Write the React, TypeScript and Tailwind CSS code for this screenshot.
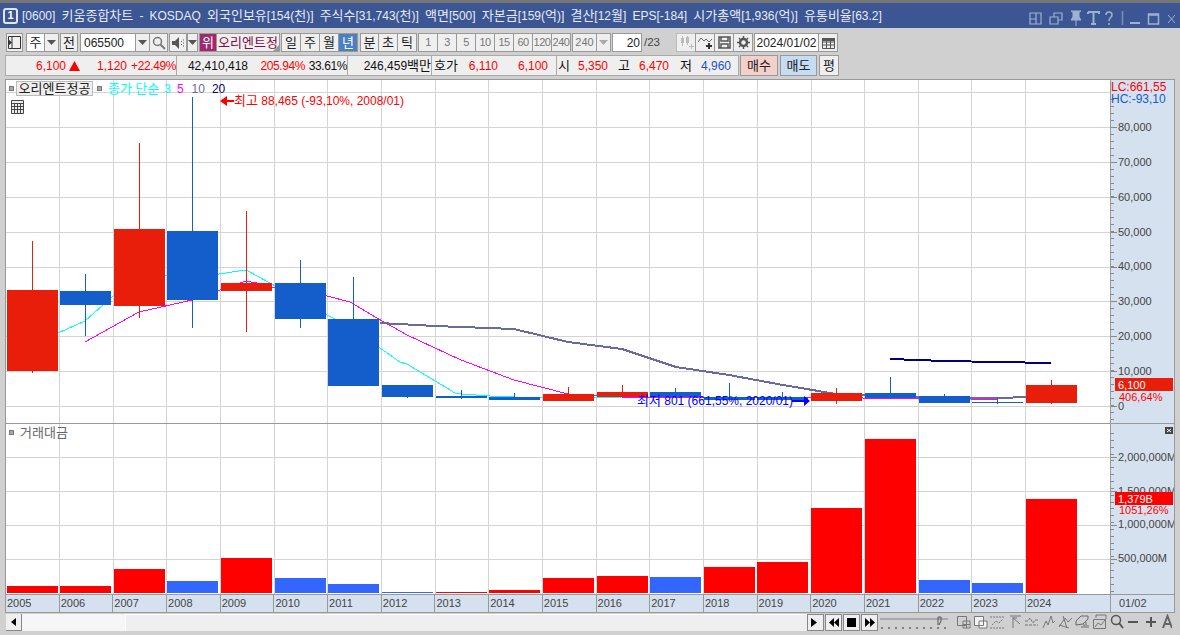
import { Fragment, type ReactNode } from "react";

const RED = "#e81e0a";
const BLUE = "#135ecb";
const gridX = [59, 113, 166, 220, 274, 327, 381, 435, 488, 542, 596, 649, 703, 757, 811, 864, 918, 971, 1025];
const priceY = [92, 127, 162, 197, 232, 267, 301, 336, 371, 406];
const volY = [457, 491, 525, 559];

// x = left edge, top/bottom = body, hi/lo = wick
const candles = [
  { x: 7, top: 290, bottom: 371, hi: 241, lo: 373, up: true },
  { x: 60, top: 291, bottom: 305, hi: 274, lo: 336, up: false },
  { x: 114, top: 229, bottom: 306, hi: 143, lo: 318, up: true },
  { x: 167, top: 231, bottom: 300, hi: 97, lo: 328, up: false },
  { x: 221, top: 283, bottom: 291, hi: 211, lo: 332, up: true },
  { x: 275, top: 283, bottom: 319, hi: 260, lo: 328, up: false },
  { x: 328, top: 319, bottom: 386, hi: 277, lo: 386, up: false },
  { x: 382, top: 385, bottom: 397, hi: 385, lo: 398, up: false },
  { x: 436, top: 396, bottom: 398, hi: 390, lo: 399, up: false },
  { x: 489, top: 397, bottom: 400, hi: 393, lo: 400, up: false },
  { x: 543, top: 394, bottom: 401, hi: 387, lo: 401, up: true },
  { x: 597, top: 392, bottom: 397, hi: 385, lo: 397, up: true },
  { x: 650, top: 392, bottom: 397, hi: 388, lo: 397, up: false },
  { x: 704, top: 397, bottom: 400, hi: 383, lo: 400, up: false },
  { x: 757, top: 397, bottom: 400, hi: 392, lo: 401, up: false },
  { x: 811, top: 393, bottom: 401, hi: 388, lo: 404, up: true },
  { x: 865, top: 393, bottom: 398, hi: 377, lo: 399, up: false },
  { x: 919, top: 396, bottom: 403, hi: 394, lo: 403, up: false },
  { x: 972, top: 402, bottom: 403, hi: 397, lo: 404, up: false },
  { x: 1026, top: 385, bottom: 403, hi: 380, lo: 404, up: true },
];

const volumes = [
  { x: 7, y: 586, up: true }, { x: 60, y: 586, up: true }, { x: 114, y: 569, up: true },
  { x: 167, y: 581, up: false }, { x: 221, y: 558, up: true }, { x: 275, y: 578, up: false },
  { x: 328, y: 584, up: false }, { x: 382, y: 592, up: false }, { x: 436, y: 592, up: true },
  { x: 489, y: 590, up: true }, { x: 543, y: 578, up: true }, { x: 597, y: 576, up: true },
  { x: 650, y: 577, up: false }, { x: 704, y: 567, up: true }, { x: 757, y: 562, up: true },
  { x: 811, y: 508, up: true }, { x: 865, y: 439, up: true }, { x: 919, y: 580, up: false },
  { x: 972, y: 583, up: false }, { x: 1026, y: 499, up: true },
];

const years = Array.from({ length: 20 }, (_, i) => String(2005 + i));

const ma3 = "58,333 85,321 103,305 113,296 139,284 166,275 192,275 219,274 246,270 270,283 300,300 327,315 335,319 380,348 400,362 407,364 455,393 461,394 490,396 540,398 622,397 676,398 836,398 998,400";
const ma5 = "85,342 139,312 192,300 220,290 246,281 262,284 300,295 327,296 350,302 377,318 400,331 407,335 461,360 514,380 568,394 622,397 836,397 890,399 944,398 998,400";
const ma10 = "380,323 435,326 514,329 568,342 622,349 676,367 729,375 783,385 836,394 890,396 944,398 1000,398 1051,396";
const ma20 = "890,359 917,360 944,361 998,362 1051,363";

// Hangul is set a bit larger than latin so the bitmap-font widths line up
function T({ children }: { children: string }) {
  return (
    <>
      {children.split(/([가-힣]+)/).map((part, i) =>
        /[가-힣]/.test(part) ? (
          <span key={i} className="text-[13px]">{part}</span>
        ) : (
          <Fragment key={i}>{part}</Fragment>
        )
      )}
    </>
  );
}

function SvgT({ children }: { children: string }) {
  return (
    <>
      {children.split(/([가-힣]+)/).map((part, i) =>
        /[가-힣]/.test(part) ? (
          <tspan key={i} fontSize="13">{part}</tspan>
        ) : (
          <tspan key={i}>{part}</tspan>
        )
      )}
    </>
  );
}

function Btn({ className = "", children }: { className?: string; children?: ReactNode }) {
  return (
    <div className={`h-[19px] shrink-0 flex items-center justify-center border border-[#999] bg-[#efefef] text-[12px] leading-none text-[#222] ${className}`}>
      {children}
    </div>
  );
}

function Arrow({ color = "#555" }: { color?: string }) {
  return (
    <svg width="9" height="5" viewBox="0 0 9 5">
      <path d="M0 0h9L4.500 5z" fill={color} />
    </svg>
  );
}

function Cell({ className = "", children }: { className?: string; children: string }) {
  return <span className={`shrink-0 whitespace-nowrap ${className}`}><T>{children}</T></span>;
}

function TitleBar() {
  const c = "#9fb1d3";
  return (
    <div className="h-[25px] bg-[#3b5693] flex items-center text-[#e6ebf5] text-[12px] leading-none">
      <div className="ml-[3px] w-[15px] h-[16px] rounded-[3px] border-2 border-[#dfe6f3] flex items-center justify-center text-[11px] font-bold text-white">1</div>
      <div className="ml-[4px] w-[900px] whitespace-nowrap [word-spacing:2.8px]">
        <T>[0600] 키움종합차트 - KOSDAQ 외국인보유[154(천)] 주식수[31,743(천)] 액면[500] 자본금[159(억)] 결산[12월] EPS[-184] 시가총액[1,936(억)] 유통비율[63.2]</T>
      </div>
      <svg className="ml-auto mr-[5px]" width="151" height="25" viewBox="1024 0 151 25" fill="none" stroke={c} strokeWidth="1.500">
        <path d="M1030 10h11v11h-11zM1030 16h6v5M1036 10v6" strokeWidth="1.200" />
        <path d="M1050 14h8v7h-8zM1054 14v-4h8v7h-4" strokeWidth="1.200" />
        <path d="M1071 8h10l-2 1v5l2 3h-10l2-3V9zM1076 17v6" fill={c} stroke={c} strokeWidth="1" />
        <path d="M1088 9h11v2M1088 9v2M1093.500 9v12M1091 21h5" strokeWidth="2" />
        <path d="M1106 12c0-4 6-4 6 0 0 3-3 2-3 6M1109 20v2" strokeWidth="1.500" />
        <path d="M1122.500 8v14" stroke="#7d90b8" />
        <path d="M1130 20h10" strokeWidth="2" />
        <path d="M1148.500 11h10v10h-10zM1148 12h11" strokeWidth="1.500" />
        <path d="M1168 12l7 8M1175 12l-7 8" strokeWidth="1" />
      </svg>
    </div>
  );
}

function ToolRow() {
  return (
    <div className="h-[19px] mt-[5px] ml-[6px] flex items-center [&>*]:-mr-px">
      <Btn className="w-[17px]">
        <svg width="13" height="13" viewBox="0 0 13 13" fill="none" stroke="#333">
          <path d="M.5.5h12v12H.5zM4 .5v12" />
          <path d="M0 3l4 3.500L0 10z" fill="#333" stroke="none" />
        </svg>
      </Btn>
      <Btn className="ml-[4px] w-[19px] !bg-white"><T>주</T></Btn>
      <Btn className="w-[15px]"><Arrow /></Btn>
      <Btn className="ml-[2px] w-[18px]"><T>전</T></Btn>
      <Btn className="ml-[3px] w-[56px] !bg-white !justify-start pl-[3px] text-[11.500px]">065500</Btn>
      <Btn className="w-[15px]"><Arrow /></Btn>
      <Btn className="w-[19px]">
        <svg width="14" height="14" viewBox="0 0 14 14" fill="none" stroke="#777" strokeWidth="1.500">
          <circle cx="5.500" cy="5.500" r="4" />
          <path d="M8.500 8.500L13 13" strokeWidth="2" />
        </svg>
      </Btn>
      <Btn className="ml-[2px] w-[18px]">
        <svg width="13" height="12" viewBox="0 0 13 12" fill="#555">
          <path d="M0 4h3l4-4v12L3 8H0z" />
          <path d="M9 4h1v1H9zM9 7h1v1H9zM11 2.500h1v1h-1zM11 5.500h1v1h-1zM11 8.500h1v1h-1z" />
        </svg>
      </Btn>
      <Btn className="ml-[1px] w-[11px]"><Arrow /></Btn>
      <Btn className="ml-[2px] w-[18px] !bg-[#a0286e] !text-white"><T>위</T></Btn>
      <Btn className="w-[64px] !text-[#7b0f4a] relative whitespace-nowrap">
        <T>오리엔트정</T>
        <span className="absolute right-0 bottom-0 w-0 h-0 border-l-[6px] border-l-transparent border-b-[6px] border-b-[#999]" />
      </Btn>
      <Btn className="ml-[2px] w-[20px]"><T>일</T></Btn>
      <Btn className="w-[20px]"><T>주</T></Btn>
      <Btn className="w-[20px]"><T>월</T></Btn>
      <Btn className="w-[20px] !bg-[#4a7fc1] !text-white"><T>년</T></Btn>
      <Btn className="ml-[3px] w-[19px]"><T>분</T></Btn>
      <Btn className="w-[20px]"><T>초</T></Btn>
      <Btn className="w-[20px]"><T>틱</T></Btn>
      {["1", "3", "5", "10", "15", "60", "120", "240"].map((n) => (
        <Btn key={n} className={`w-[20px] !text-[#777] !text-[11px] tracking-[-0.5px] ${n === "1" ? "ml-[2px]" : ""}`}>{n}</Btn>
      ))}
      <Btn className="ml-[2px] w-[25px] !text-[#777] !text-[11px]">240</Btn>
      <Btn className="w-[15px]"><Arrow color="#aaa" /></Btn>
      <Btn className="ml-[2px] w-[30px] !bg-white !justify-end pr-[1px] text-[11.500px]">20</Btn>
      <span className="w-[36px] pl-[3px] text-[11.500px] leading-none text-[#444]">/23</span>
      <Btn className="w-[20px] !border-[#bbb]">
        <svg width="15" height="13" viewBox="0 0 15 13" fill="#bbb">
          <path d="M2 2h3v5H2zM7 1h3v6H7zM3 0h1v10H3zM8 0h1v9H8z" />
          <path d="M10 10h5v1h-5zM12 8h1v5h-1z" />
        </svg>
      </Btn>
      <Btn className="w-[20px]">
        <svg width="15" height="13" viewBox="0 0 15 13" fill="none" stroke="#666">
          <path d="M0 6l3-4 3 3 2-2 3 3 3-3" />
          <path d="M8 10h6M11 7v6" stroke="#333" strokeWidth="2" />
        </svg>
      </Btn>
      <Btn className="w-[20px]">
        <svg width="13" height="13" viewBox="0 0 13 13" fill="none" stroke="#555" strokeWidth="1.500">
          <path d="M1 1h11v11H1zM3 1v4h7V1M3 12V8h7v4" />
        </svg>
      </Btn>
      <Btn className="w-[20px]">
        <svg width="13" height="13" viewBox="0 0 13 13" fill="none" stroke="#555">
          <circle cx="6.500" cy="6.500" r="3.500" strokeWidth="2.500" />
          <path d="M6.500 0v13M0 6.500h13M2 2l9 9M11 2l-9 9" strokeWidth="1.500" strokeDasharray="2 9 2 0" />
        </svg>
      </Btn>
      <Btn className="ml-[2px] w-[65px] !bg-white text-[11.500px]">2024/01/02</Btn>
      <Btn className="w-[20px]">
        <svg width="13" height="12" viewBox="0 0 13 12" fill="none" stroke="#555">
          <path d="M.5 1.500h12v10H.5zM.5 5h12M.5 8h12M4.500 3v8M8.500 3v8" />
          <path d="M0 1h13v3H0z" fill="#555" stroke="none" />
        </svg>
      </Btn>
    </div>
  );
}

function QuoteRow() {
  const red = "text-[#ff0000]";
  return (
    <div className="h-[21px] mt-[3px] ml-[5px] flex items-center text-[12px] leading-none">
      <div className="h-[21px] w-[734px] shrink-0 flex items-center border border-[#aaa] bg-[#efefef] text-[#111]">
        <Cell className={`w-[60px] text-right ${red}`}>6,100</Cell>
        <svg className="ml-[3px] shrink-0" width="11" height="10" viewBox="0 0 11 10"><path d="M5.500 0L11 10H0z" fill="#ff0000" /></svg>
        <Cell className={`w-[47px] text-right ${red}`}>1,120</Cell>
        <Cell className={`w-[49px] text-right tracking-[-0.4px] ${red}`}>+22.49%</Cell>
        <span className="w-px h-full bg-[#aaa] shrink-0" />
        <Cell className="w-[71px] text-right">42,410,418</Cell>
        <Cell className={`w-[57px] text-right tracking-[-0.4px] ${red}`}>205.94%</Cell>
        <Cell className="w-[42px] text-right tracking-[-0.4px]">33.61%</Cell>
        <span className="w-px h-full bg-[#aaa] shrink-0" />
        <Cell className="w-[83px] text-right">246,459백만</Cell>
        <span className="w-px h-full bg-[#aaa] shrink-0" />
        <Cell className="w-[26px] text-right">호가</Cell>
        <Cell className={`w-[40px] text-right ${red}`}>6,110</Cell>
        <Cell className={`w-[50px] text-right ${red}`}>6,100</Cell>
        <span className="w-px h-full bg-[#aaa] shrink-0 ml-[8px]" />
        <Cell className="w-[13px] text-right">시</Cell>
        <Cell className={`w-[38px] text-right ${red}`}>5,350</Cell>
        <Cell className="w-[22px] text-right">고</Cell>
        <Cell className={`w-[39px] text-right ${red}`}>6,470</Cell>
        <Cell className="w-[23px] text-right">저</Cell>
        <Cell className="w-[39px] text-right text-[#1f50c8]">4,960</Cell>
      </div>
      <Btn className="ml-[1px] !h-[21px] w-[38px] !bg-[#f5cfc9]"><T>매수</T></Btn>
      <Btn className="ml-[2px] !h-[21px] w-[37px] !bg-[#c5dcf2]"><T>매도</T></Btn>
      <Btn className="ml-[2px] !h-[21px] w-[20px]"><T>평</T></Btn>
    </div>
  );
}

function Grid({ ys, top, bottom }: { ys: number[]; top: number; bottom: number }) {
  return (
    <g stroke="#d4d4d4" strokeWidth="1" shapeRendering="crispEdges">
      {gridX.map((x) => <line key={x} x1={x + 0.5} x2={x + 0.5} y1={top} y2={bottom} />)}
      {ys.map((y) => <line key={y} x1={5} x2={1110} y1={y + 0.5} y2={y + 0.5} />)}
    </g>
  );
}

function PricePane() {
  return (
    <svg className="block absolute inset-0" width="1104" height="344" viewBox="6 80 1104 344" fontSize="12">
      <Grid ys={priceY} top={80} bottom={424} />
      <g fill="none" shapeRendering="crispEdges">
        <polyline points={ma3} stroke="#00ffff" strokeWidth="1" />
        <polyline points={ma5} stroke="#ff00ff" strokeWidth="1" />
        <polyline points={ma10} stroke="#6a6a9e" strokeWidth="2" />
        <polyline points={ma20} stroke="#000080" strokeWidth="2" />
      </g>
      <g shapeRendering="crispEdges">
        {candles.map((k) => (
          <g key={k.x} fill={k.up ? RED : BLUE}>
            <rect x={k.x + 25} y={k.hi} width="1" height={k.lo - k.hi} />
            <rect x={k.x} y={k.top} width="51" height={k.bottom - k.top} />
          </g>
        ))}
      </g>
      <path d="M220 101l7-5v4h7v2h-7v4z" fill="#ff0000" />
      <text x="234" y="105" fill="#ff0000"><SvgT>최고 88,465 (-93,10%, 2008/01)</SvgT></text>
      <text x="637" y="405" fill="#0000ff"><SvgT>최저 801 (661,55%, 2020/01)</SvgT></text>
      <path d="M792 400h12v-4l6 5-6 5v-4h-12z" fill="#0000ff" />
    </svg>
  );
}

function ChartLegend() {
  return (
    <>
      <div className="absolute left-[3px] top-[1px] flex items-center h-[15px] text-[12px] leading-none">
        <span className="w-[5px] h-[5px] bg-[#aaa] border border-[#777]" />
        <span className="ml-[2px] w-[77px] h-[15px] flex items-center justify-center bg-[#efefef] border border-[#bbb] text-[#222]"><T>오리엔트정공</T></span>
        <span className="ml-[4px] w-[5px] h-[5px] bg-[#aaa] border border-[#777]" />
        <span className="ml-[6px] text-[#00ffff] whitespace-nowrap"><T>종가 단순</T></span>
        <span className="ml-[5px] text-[#00ffff]">3</span>
        <span className="ml-[6px] text-[#ff00ff]">5</span>
        <span className="ml-[8px] text-[#6a6a9e]">10</span>
        <span className="ml-[7px] text-[#000080]">20</span>
      </div>
      <svg className="absolute left-[5px] top-[20px]" width="13" height="14" viewBox="0 0 13 14" fill="#eee" stroke="#444">
        <path d="M.5.500h12v13H.5z" />
        <path d="M.5 3.500h12M.5 6.500h12M.5 9.500h12M3.500 3v10M6.500 3v10M9.500 3v10" />
      </svg>
    </>
  );
}

function VolumePane() {
  return (
    <svg className="block absolute inset-0" width="1104" height="170" viewBox="6 424 1104 170">
      <Grid ys={volY} top={424} bottom={594} />
      <g shapeRendering="crispEdges">
        {volumes.map((v) => (
          <rect key={v.x} x={v.x} y={v.y} width="51" height={593 - v.y} fill={v.up ? "#ff0000" : "#3366ff"} />
        ))}
      </g>
    </svg>
  );
}

function Ticks({ from, to, step, major }: { from: number; to: number; step: number; major: number[] }) {
  const ys: number[] = [];
  for (let y = from; y < to; y += step) ys.push(Math.round(y));
  return (
    <g stroke="#888" shapeRendering="crispEdges">
      {ys.map((y) => <line key={y} x1="1111" x2="1114" y1={y + 0.5} y2={y + 0.5} />)}
      {major.map((y) => <line key={y} x1="1111" x2="1117" y1={y + 0.5} y2={y + 0.5} />)}
    </g>
  );
}

function PriceAxis() {
  const labels = [
    ["80,000", 127], ["70,000", 162], ["60,000", 197], ["50,000", 232], ["40,000", 266],
    ["30,000", 301], ["20,000", 336], ["10,000", 371],
  ] as const;
  return (
    <svg className="block" width="63" height="344" viewBox="1111 80 63 344" fontSize="11" fill="#444">
      <Ticks from={99} to={420} step={6.96} major={[127, 162, 197, 232, 267, 301, 336, 371, 406]} />
      {labels.map(([t, y]) => <text key={t} x="1118" y={y + 4}>{t}</text>)}
      <text x="1118" y="410">0</text>
      <text x="1111" y="91" fill="#ff0000" fontSize="12">LC:661,55</text>
      <text x="1111" y="103" fill={BLUE} fontSize="12">HC:-93,10</text>
      <rect x="1115" y="378" width="58" height="13" fill={RED} />
      <text x="1118" y="389" fill="#fff">6,100</text>
      <text x="1119" y="401" fill="#ff0000">406,64%</text>
    </svg>
  );
}

function VolumeAxis() {
  return (
    <svg className="block" width="63" height="170" viewBox="1111 424 63 170" fontSize="11" fill="#444">
      <Ticks from={433} to={594} step={6.85} major={[457, 491, 525, 559]} />
      <text x="1118" y="461">2,000,000M</text>
      <text x="1118" y="495">1,500,000M</text>
      <text x="1118" y="528">1,000,000M</text>
      <text x="1118" y="562">500,000M</text>
      <rect x="1115" y="492" width="58" height="13" fill="#ff0000" />
      <text x="1118" y="503" fill="#fff">1,379B</text>
      <text x="1119" y="514" fill="#ff0000">1051,26%</text>
      <rect x="1165" y="427" width="8" height="7" fill="#444" />
      <path d="M1167 429l4 3M1171 429l-4 3" stroke="#fff" />
    </svg>
  );
}

function DateAxis() {
  return (
    <div className="h-[19px] flex border-y border-[#999] bg-[#d6e1ef] text-[11px] leading-none text-[#444]">
      <div className="w-[1105px] shrink-0 grid grid-cols-[repeat(19,minmax(0,1fr))_85px]">
        {years.map((y) => (
          <div key={y} className="border-r border-[#999] pl-[1px] pt-[3px]">{y}</div>
        ))}
      </div>
      <div className="flex-1 pl-[8px] pt-[3px]">01/02</div>
    </div>
  );
}

function BottomBar() {
  const s = "#777";
  return (
    <div className="h-[17px] mt-[1px] ml-[1px] flex items-stretch">
      <div className="w-[16px] flex items-center justify-center bg-[#efefef] border-r border-b border-[#888]">
        <svg width="5" height="8" viewBox="0 0 5 8"><path d="M5 0v8L0 4z" fill="#000" /></svg>
      </div>
      <div className="w-[103px] bg-[#f6f6f6]" />
      <div className="w-[682px] bg-[#efefef] border-t border-l border-white" />
      <div className="flex gap-px">
        {[
          "M0 0l6 4.500L0 9z",
          "M5 0v9L0 4.500zM10 0v9L5 4.500z",
          "M0 0h9v9H0z",
          "M0 0l5 4.500L0 9zM5 0l5 4.500L5 9z",
        ].map((d, i) => (
          <div key={i} className="w-[17px] flex items-center justify-center bg-[#efefef] border border-[#888]">
            <svg width="10" height="9" viewBox="0 0 10 9"><path d={d} fill="#000" /></svg>
          </div>
        ))}
      </div>
      <svg className="shrink-0" width="294" height="17" viewBox="878 614 294 17" fill="none" stroke={s}>
        <path d="M880 619h68" stroke="#aaa" strokeWidth="2" />
        <path d="M938 617v8M938 617h3v4l-2 4" stroke="#555" />
        <path d="M882 627v2M889 627v2M896 627v2M903 627v2M910 627v2M917 627v2M924 627v2M931 627v2M938 627v2M945 627v2" stroke="#333" />
        <path d="M957.500 616.500h9v9h-9zM963 621h7v7h-7zM966.500 621v7M963 624.500h7" />
        <path d="M974.500 616.500h9v9h-9zM979 621h8v7h-8z" fill="#f4f4f4" />
        <path d="M990 617h14M990 628h14M992 625l4-4 3 2 4-4" strokeDasharray="2 1" />
        <path d="M1010 616h11M1013 628v-11M1013 618l7 6M1013 618h4" />
        <path d="M1025 621h3l2-3 3 5 2-3h3M1025 625h13" strokeDasharray="3 1" />
        <path d="M1043 628l3-7 2 4 3-9 2 7 2-2" />
        <path d="M1059 627l6-9 3 4 4-4M1059 625l10 3M1063 616l4 12" />
        <path d="M1076 625v-4l5-5h7v3l-5 5zM1084 628v-4M1086 628v-6M1088 628v-3M1082 628v-2" stroke="#666" />
        <path d="M1093.500 619.500h12v9h-12zM1095 627l3-4 3 2 4-5M1096 618v-3h10v4" />
        <circle cx="1116" cy="620" r="4.500" strokeWidth="1.500" stroke="#555" />
        <path d="M1119 623l4 5" strokeWidth="2" stroke="#555" />
        <path d="M1128 622h10M1146 622h10M1151 617v10" stroke="#555" strokeWidth="2" />
        <path d="M1163 628l4.500-12 4.500 12M1165 624h5" stroke="#666" strokeWidth="2" />
      </svg>
    </div>
  );
}

export default function App() {
  return (
    <div className="w-[1180px] h-[635px] overflow-hidden bg-[#d0d0d0] [font-family:'Liberation_Sans','Noto_Sans_CJK_KR',sans-serif]">
      <div className="h-[3px] bg-[#777]" />
      <TitleBar />
      <ToolRow />
      <QuoteRow />
      <div className="mt-[3px] ml-[5px] mr-[5px] w-[1170px] border-t border-r border-l border-[#999]">
        <div className="flex h-[344px] border-b border-[#999]">
          <div className="relative w-[1104px] bg-white overflow-hidden shrink-0">
            <PricePane />
            <ChartLegend />
          </div>
          <div className="flex-1 bg-[#d6e1ef] border-l border-[#999] overflow-hidden"><PriceAxis /></div>
        </div>
        <div className="flex h-[170px]">
          <div className="relative w-[1104px] bg-white overflow-hidden shrink-0">
            <VolumePane />
            <div className="absolute left-[3px] top-[2px] flex items-center text-[12px] leading-none text-[#666]">
              <span className="w-[5px] h-[5px] bg-[#aaa] border border-[#777]" />
              <span className="ml-[6px]"><T>거래대금</T></span>
            </div>
          </div>
          <div className="flex-1 bg-[#d6e1ef] border-l border-[#999] overflow-hidden"><VolumeAxis /></div>
        </div>
        <DateAxis />
      </div>
      <div className="ml-[5px]"><BottomBar /></div>
    </div>
  );
}
